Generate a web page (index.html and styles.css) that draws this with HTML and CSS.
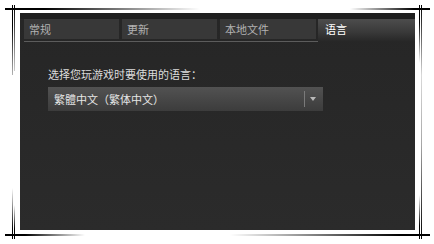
FILE: index.html
```html
<!DOCTYPE html>
<html lang="zh-CN">
<head>
<meta charset="utf-8">
<title>语言</title>
<link rel="stylesheet" href="styles.css">
</head>
<body>
<div class="frame">
  <div class="line h top-left"></div>
  <div class="line h top-right"></div>
  <div class="line h bot-left"></div>
  <div class="line h bot-right"></div>
  <div class="line v l-outer-top"></div>
  <div class="line v l-inner-top"></div>
  <div class="line v l-outer-bot"></div>
  <div class="line v l-inner-bot"></div>
  <div class="line v r-inner-top"></div>
  <div class="line v r-inner-bot"></div>
  <div class="line v r-outer"></div>

  <div class="panel">
    <div class="tabs">
      <div class="tab">常规</div>
      <div class="tab">更新</div>
      <div class="tab">本地文件</div>
      <div class="tab active">语言</div>
    </div>
    <div class="content">
      <div class="label">选择您玩游戏时要使用的语言：</div>
      <div class="select">
        <span class="select-text">繁體中文（繁体中文）</span>
        <span class="select-sep"></span>
        <span class="select-arrow"></span>
      </div>
    </div>
  </div>
</div>
</body>
</html>
```
FILE: styles.css
```css
html, body {
  margin: 0;
  padding: 0;
  background: #ffffff;
}

body {
  font-family: "Noto Sans CJK SC", "Noto Sans", "Liberation Sans", sans-serif;
  font-size: 11px;
}

.frame {
  position: relative;
  width: 434px;
  height: 244px;
  padding: 13px 0 0 20px;
  box-sizing: border-box;
}

/* decorative corner lines */
.line {
  position: absolute;
}
.h { height: 2px; }
.v { width: 1px; }

.top-left {
  left: 5px; top: 8px; width: 195px;
  background: linear-gradient(to right, #000 0%, #000 20%, rgba(0,0,0,0) 100%);
}
.top-right {
  left: 350px; top: 8px; width: 80px;
  background: linear-gradient(to left, #000 0%, #000 20%, rgba(0,0,0,0) 100%);
}
.bot-left {
  left: 5px; top: 234px; width: 80px;
  background: linear-gradient(to right, #000 0%, #000 25%, rgba(0,0,0,0) 100%);
}
.bot-right {
  left: 230px; top: 234px; width: 200px;
  background: linear-gradient(to left, #000 0%, #000 15%, rgba(0,0,0,0) 100%);
}

.l-outer-top {
  left: 12px; top: 5px; height: 70px;
  background: linear-gradient(to bottom, #000 0%, #000 30%, rgba(0,0,0,0.3) 100%);
}
.l-inner-top {
  left: 14px; top: 5px; height: 66px;
  background: linear-gradient(to bottom, #000 0%, rgba(0,0,0,0.2) 100%);
}
.l-outer-bot {
  left: 12px; top: 188px; height: 51px;
  background: linear-gradient(to top, #000 0%, #000 20%, rgba(0,0,0,0) 100%);
}
.l-inner-bot {
  left: 14px; top: 205px; height: 34px;
  background: linear-gradient(to top, #000 0%, #000 30%, rgba(0,0,0,0) 100%);
}
.r-inner-top {
  left: 419px; top: 5px; height: 58px;
  background: linear-gradient(to bottom, #000 0%, #000 30%, rgba(0,0,0,0) 100%);
}
.r-inner-bot {
  left: 419px; top: 195px; height: 44px;
  background: linear-gradient(to top, #000 0%, #000 30%, rgba(0,0,0,0) 100%);
}
.r-outer {
  left: 421px; top: 5px; height: 234px;
  background: linear-gradient(to bottom, #000 0%, rgba(0,0,0,0.15) 30%, rgba(0,0,0,0.35) 60%, #000 100%);
}

/* panel */
.panel {
  width: 395px;
  height: 217px;
  box-sizing: border-box;
  padding: 6px 1px 0 4px;
  background: linear-gradient(to bottom, #1f1f1f 0, #1f1f1f 6px, #262626 6px, #2b2b2b 100%);
}

.tabs {
  display: grid;
  grid-template-columns: 95px 95px 96px 96px;
  column-gap: 3px;
  height: 22px;
  border-bottom: 1px solid #5c5c5c;
}

.tab {
  align-self: start;
  height: 20px;
  line-height: 20px;
  padding-left: 5px;
  background: #383838;
  color: #b2b2b2;
  white-space: nowrap;
}

.tab.active {
  align-self: stretch;
  height: auto;
  margin-left: -1px;
  margin-bottom: -1px;
  padding-left: 7px;
  line-height: 20px;
  color: #ffffff;
  background: linear-gradient(to bottom, #4d4d4d 0%, #3a3a3a 55%, #262626 100%);
}

.content {
  padding: 25px 0 0 24px;
}

.label {
  line-height: 15px;
  color: #dcdcdc;
}

.select {
  display: flex;
  align-items: center;
  width: 275px;
  height: 24px;
  margin-top: 5px;
  background: linear-gradient(to bottom, #525252 0%, #3c3c3c 100%);
}

.select-text {
  flex: 1;
  padding-left: 6px;
  color: #e6e6e6;
  white-space: nowrap;
}

.select-sep {
  width: 1px;
  height: 16px;
  background: #7a7a7a;
}

.select-arrow {
  width: 0;
  height: 0;
  margin: 0 7px 0 5px;
  border-left: 3.5px solid transparent;
  border-right: 3.5px solid transparent;
  border-top: 4px solid #b8b8b8;
}
```
